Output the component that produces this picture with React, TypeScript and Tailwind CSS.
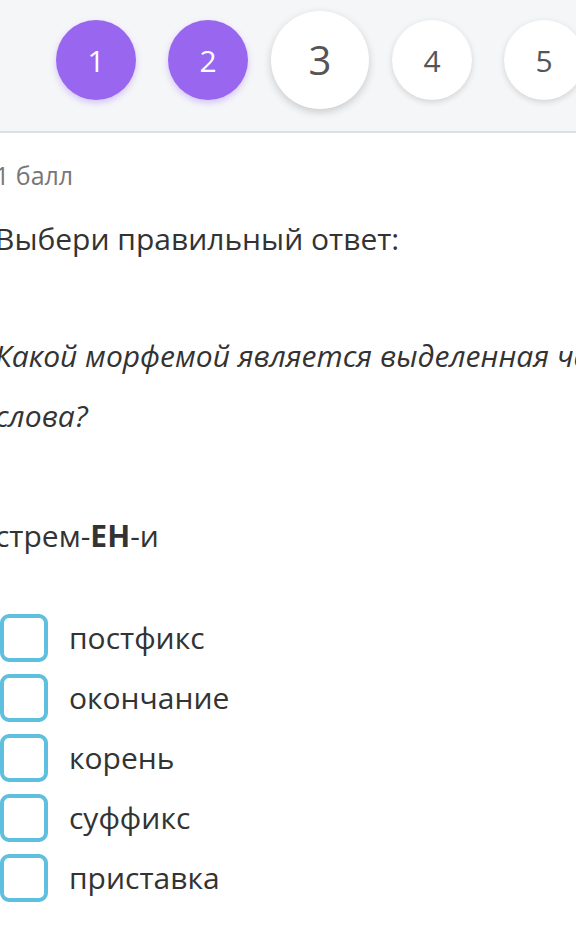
import React from 'react'

const steps = [
  { n: 1, done: true },
  { n: 2, done: true },
  { n: 3, current: true },
  { n: 4 },
  { n: 5 },
]

const options = ['постфикс', 'окончание', 'корень', 'суффикс', 'приставка']

export default function App() {
  return (
    <div className="min-h-[947px] w-[576px] overflow-hidden bg-white font-['Open_Sans',sans-serif] text-[#333]">
      <div className="flex h-[133px] items-center gap-8 border-b-2 border-[#dedfe2] bg-[#f5f6f8] pb-[11px] pl-[56px]">
        {steps.map((s) =>
          s.current ? (
            <div
              key={s.n}
              className="-mx-[9px] flex h-[98px] w-[98px] shrink-0 items-center justify-center rounded-full bg-white text-[40px] text-[#555] shadow-[0_3px_8px_rgba(0,0,0,0.18)]"
            >
              {s.n}
            </div>
          ) : (
            <div
              key={s.n}
              className={
                s.done
                  ? 'flex h-[80px] w-[80px] shrink-0 items-center justify-center rounded-full bg-[#9966f0] text-[30px] text-white shadow-[0_3px_6px_rgba(153,102,240,0.35)]'
                  : 'flex h-[80px] w-[80px] shrink-0 items-center justify-center rounded-full bg-white text-[30px] text-[#555] shadow-[0_2px_6px_rgba(0,0,0,0.15)]'
              }
            >
              {s.n}
            </div>
          )
        )}
      </div>

      <div className="-ml-[5px] pt-[24px]">
        <p className="text-[25px] leading-[36px] text-[#777]">1 балл</p>
        <p className="mt-[26px] text-[30px] leading-[40px]">Выбери правильный ответ:</p>

        <p className="mt-[67px] whitespace-nowrap text-[30px] italic leading-[60px]">
          Какой морфемой является выделенная часть
          <br />
          слова?
        </p>

        <p className="mt-[70px] text-[30px] leading-[40px]">
          стрем-<b className="font-bold">ЕН</b>-и
        </p>

        <div className="mt-[58px] flex flex-col gap-[12px] pl-[5px]">
          {options.map((o) => (
            <label key={o} className="flex items-center gap-[21px]">
              <span className="h-[48px] w-[48px] shrink-0 rounded-[9px] border-[4px] border-[#5fbfde] bg-white" />
              <span className="text-[30px] leading-[40px]">{o}</span>
            </label>
          ))}
        </div>
      </div>
    </div>
  )
}
